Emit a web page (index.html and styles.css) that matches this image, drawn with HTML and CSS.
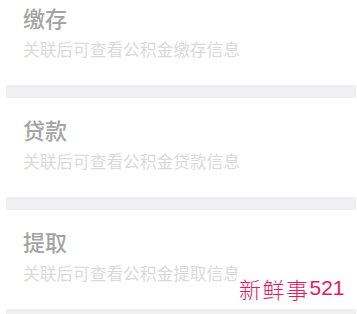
FILE: index.html
```html
<!DOCTYPE html>
<html lang="zh">
<head>
<meta charset="utf-8">
<link rel="stylesheet" href="styles.css">
</head>
<body>
<div class="list">
  <div class="card">
    <div class="title">缴存</div>
    <div class="desc">关联后可查看公积金缴存信息</div>
  </div>
  <div class="card">
    <div class="title">贷款</div>
    <div class="desc">关联后可查看公积金贷款信息</div>
  </div>
  <div class="card">
    <div class="title">提取</div>
    <div class="desc">关联后可查看公积金提取信息</div>
  </div>
</div>
<div class="watermark"><span class="wm-cn">新鲜事</span><span class="wm-num">521</span></div>
</body>
</html>
```
FILE: styles.css
```css
html, body {
  margin: 0;
  padding: 0;
  background: #ffffff;
  overflow: hidden;
}
body {
  width: 357px;
  height: 314px;
  position: relative;
  font-family: "Noto Sans CJK SC", "Noto Sans", sans-serif;
}
.list {
  margin: -14px 1px 0 6px;
  background: #efeff4;
  display: flex;
  flex-direction: column;
  gap: 13px;
  padding-bottom: 13px;
}
.card {
  background: #ffffff;
  height: 99px;
  box-sizing: border-box;
  padding: 20px 0 0 17px;
  display: flex;
  flex-direction: column;
  gap: 13px;
}
.title {
  font-size: 22px;
  line-height: 22px;
  font-weight: 500;
  color: #a4a4a4;
}
.desc {
  font-size: 16.7px;
  line-height: 16.7px;
  color: #dadada;
}
.watermark {
  position: absolute;
  left: 237px;
  top: 274px;
  background: #ffffff;
  color: #e8175d;
  display: flex;
  align-items: center;
  padding: 0 2px;
}
.wm-cn {
  font-family: "Noto Sans CJK SC", serif;
  font-weight: 300;
  font-size: 22px;
  line-height: 28px;
  letter-spacing: 1.5px;
}
.wm-num {
  font-family: "Liberation Sans", sans-serif;
  font-size: 21px;
  line-height: 28px;
}
```
